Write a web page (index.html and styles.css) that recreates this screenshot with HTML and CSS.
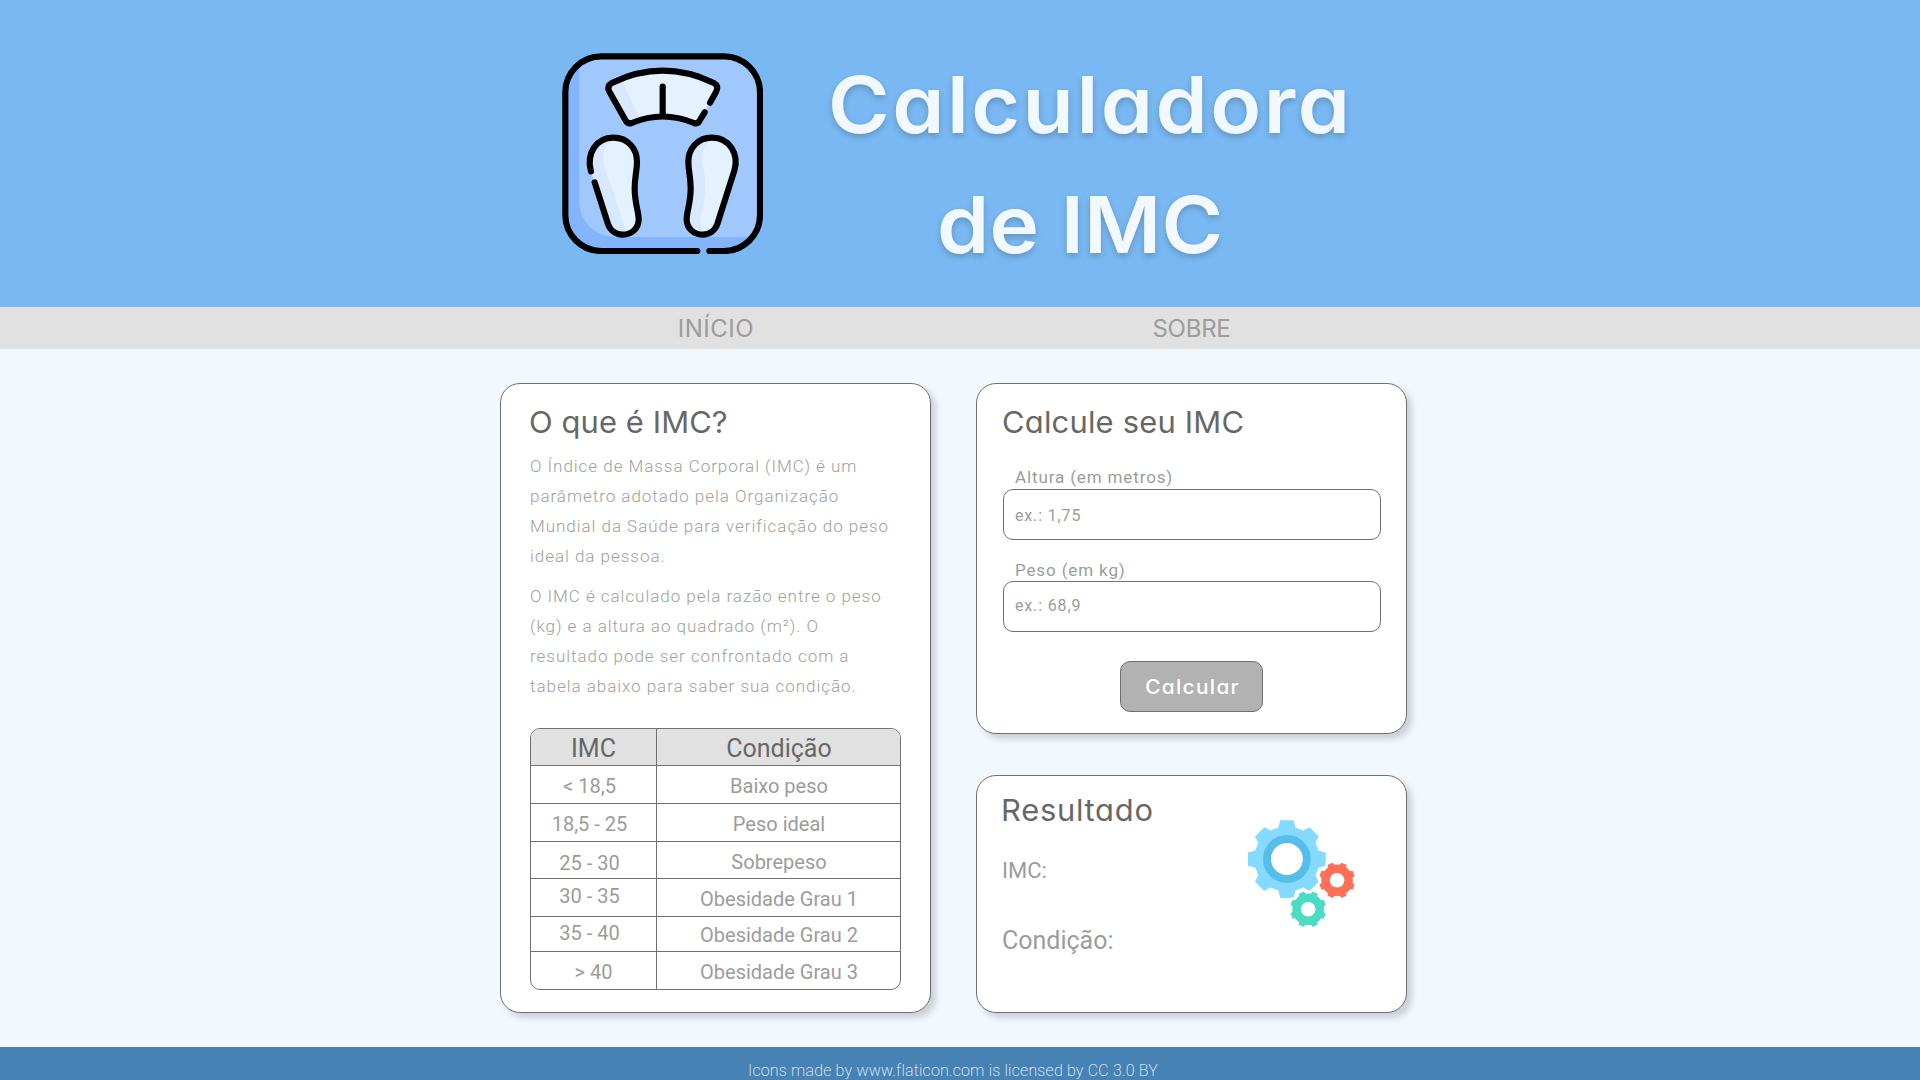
FILE: index.html
```
<!DOCTYPE html>
<html lang="pt-BR">
<head>
<meta charset="utf-8">
<title>Calculadora de IMC</title>
<link rel="stylesheet" href="styles.css">
</head>
<body>
<header class="header">
  <svg class="logo" viewBox="66 69 603 603" aria-hidden="true">
    <defs>
      <clipPath id="body"><rect x="76" y="79" width="584" height="584" rx="108"/></clipPath>
      <path id="foot" d="M220 323C265 323 291 358 291 395C291 422 284 440 284 475C284 520 296 545 296 568C296 595 275 614 248 614C228 614 211 602 204 582L153 422C138 372 168 323 220 323Z"/>
    </defs>
    <g clip-path="url(#body)">
      <rect x="76" y="79" width="584" height="584" fill="#82b5fe"/>
      <path d="M118 60H680V612Q650 621 600 621H224A106 106 0 0 1 118 515Z" fill="#a1c8fd"/>
    </g>
    <path d="M217 158Q368 86 520 158Q537 168 528 183L480 270Q474 283 462 279Q368 240 275 279Q263 283 256 270L207 183Q200 168 217 158Z" fill="#e4f1ff"/>
    <path d="M217 158L243 148L298 262Q286 268 275 279Q263 283 256 270L207 183Q200 168 217 158Z" fill="#d8e8ff"/>
    <use href="#foot" fill="#e4f1ff"/>
    <path d="M220 326C190 345 186 375 190 400C194 420 203 435 212 465L254 590Q257 604 250 612C228 614 211 602 204 582L153 422C138 372 168 323 220 326Z" fill="#d8e8ff"/>
    <use href="#foot" fill="#e4f1ff" transform="matrix(-1 0 0 1 736 0)"/>
    <path d="M516 325C485 350 482 385 490 415C500 455 496 510 484 548C474 580 486 600 498 612C462 618 440 595 440 568C440 545 452 520 452 475C452 440 445 422 445 395C445 358 471 323 516 325Z" fill="#d8e8ff"/>
    <g fill="none" stroke="#000" stroke-width="18.5" stroke-linecap="round" stroke-linejoin="round">
      <path d="M508 663H552A108 108 0 0 0 660 555V187A108 108 0 0 0 552 79H184A108 108 0 0 0 76 187V555A108 108 0 0 0 184 663H472"/>
      <path d="M510 218L528 186Q538 168 520 158Q368 86 217 158Q200 168 207 183L256 270Q263 283 275 279Q368 240 462 279Q474 283 480 270L494 247"/>
      <path d="M368 170V258"/>
      <path d="M153 424C138 372 168 323 220 323C265 323 291 358 291 395C291 422 284 440 284 475C284 520 296 545 296 568C296 595 275 614 248 614C228 614 211 602 204 582L164 457"/>
      <use href="#foot" transform="matrix(-1 0 0 1 736 0)"/>
    </g>
  </svg>
  <h1 class="title"><span class="title-top">Calculadora</span><span class="title-bottom">de IMC</span></h1>
</header>

<nav class="nav">
  <a class="nav-link nav-home">INÍCIO</a>
  <a class="nav-link nav-about">SOBRE</a>
</nav>

<main class="main">
  <section class="card about">
    <h2 class="heading">O que é IMC?</h2>
    <p class="text">O Índice de Massa Corporal (IMC) é um<br>parâmetro adotado pela Organização<br>Mundial da Saúde para verificação do peso<br>ideal da pessoa.</p>
    <p class="text">O IMC é calculado pela razão entre o peso<br>(kg) e a altura ao quadrado (m²). O<br>resultado pode ser confrontado com a<br>tabela abaixo para saber sua condição.</p>
    <div class="table">
      <div class="cell head">IMC</div><div class="cell head">Condição</div>
      <div class="cell range">&lt; 18,5</div><div class="cell">Baixo peso</div>
      <div class="cell range">18,5 - 25</div><div class="cell">Peso ideal</div>
      <div class="cell range low">25 - 30</div><div class="cell">Sobrepeso</div>
      <div class="cell range high">30 - 35</div><div class="cell">Obesidade Grau 1</div>
      <div class="cell range higher">35 - 40</div><div class="cell raised">Obesidade Grau 2</div>
      <div class="cell">&gt; 40</div><div class="cell">Obesidade Grau 3</div>
    </div>
  </section>

  <div class="column">
    <section class="card form">
      <h2 class="heading heading-form">Calcule seu IMC</h2>
      <label class="label" for="height">Altura (em metros)</label>
      <input class="input input-height" id="height" placeholder="ex.: 1,75">
      <label class="label label-weight" for="weight">Peso (em kg)</label>
      <input class="input input-weight" id="weight" placeholder="ex.: 68,9">
      <button class="button"><span class="button-text">Calcular</span></button>
    </section>

    <section class="card result">
      <div>
        <h2 class="heading heading-result">Resultado</h2>
        <p class="result-imc">IMC:</p>
        <p class="result-condition">Condição:</p>
      </div>
      <svg class="gears" viewBox="54 60 322 321" aria-hidden="true">
        <defs>
          <path id="gear" d="M-10-47L-8.5-54H8.5L10-47Q14-46 20 0H-20Q-14-46-10-47Z"/>
          <g id="small">
            <circle r="47.5"/>
            <use href="#gear" transform="rotate(22.5)"/><use href="#gear" transform="rotate(67.5)"/>
            <use href="#gear" transform="rotate(112.5)"/><use href="#gear" transform="rotate(157.5)"/>
            <use href="#gear" transform="rotate(202.5)"/><use href="#gear" transform="rotate(247.5)"/>
            <use href="#gear" transform="rotate(292.5)"/><use href="#gear" transform="rotate(337.5)"/>
          </g>
        </defs>
        <path transform="translate(171 177)" fill="#85daff" d="M-20-117H20L26-95L49-86L68-96L96-68L86-49L95-26L117-20V20L95 26L86 49L96 68L68 96L49 86L26 95L20 117H-20L-26 95L-49 86L-68 96L-96 68L-86 49L-95 26L-117 20V-20L-95-26L-86-49L-96-68L-68-96L-49-86L-26-95Z"/>
        <circle cx="171" cy="177" r="60" fill="#fff" stroke="#56beeb" stroke-width="24"/>
        <g transform="translate(322 241)"><use href="#small" fill="#fff" stroke="#fff" stroke-width="14"/><use href="#small" fill="#ff7058"/><circle r="22" fill="#fff"/></g>
        <g transform="translate(235 328)"><use href="#small" fill="#fff" stroke="#fff" stroke-width="14"/><use href="#small" fill="#4cdbc4"/><circle r="22" fill="#fff"/></g>
      </svg>
    </section>
  </div>
</main>

<footer class="footer">Icons made by www.flaticon.com is licensed by CC 3.0 BY</footer>
</body>
</html>
```
FILE: styles.css
```
* { box-sizing: border-box; margin: 0; padding: 0; }

body {
  height: 1080px;
  overflow: hidden;
  background: #f3f8ff;
  color: #9c9c9c;
  font-family: Roboto, sans-serif;
}

.header {
  display: flex;
  height: 307px;
  padding-left: 562px;
  background: #79b8f2;
}
.logo { width: 201px; height: 201px; margin-top: 53px; }
.title {
  display: flex;
  flex-direction: column;
  align-items: flex-start;
  padding: 44px 0 0 65px;
  color: #f2f8ff;
  font: 600 79px/120px Inter, sans-serif;
  font-feature-settings: "cv11";
  text-shadow: 0 3px 6px rgba(0, 0, 0, .2);
}
.title-top, .title-bottom { transform: scaleX(1.06); transform-origin: left; }
.title-top { letter-spacing: 2.35px; }
.title-bottom { margin-left: 109px; letter-spacing: .25px; }

.nav {
  display: grid;
  grid-template-columns: 431px 431px;
  column-gap: 45px;
  height: 42px;
  padding-left: 500px;
  background: #e1e1e1;
}
.nav-link {
  color: #9c9c9c;
  font: 24px/44px Inter, sans-serif;
  text-align: center;
}
.nav-home { padding-left: 1px; letter-spacing: .5px; }
.nav-about { letter-spacing: -.25px; }

.main { display: flex; gap: 45px; height: 698px; padding: 34px 0 0 500px; }
.column { display: flex; flex-direction: column; gap: 41px; }

.card {
  width: 431px;
  border: 1px solid #707070;
  border-radius: 20px;
  background: #fff;
  box-shadow: 5px 5px 6px rgba(0, 0, 0, .16);
}
.heading {
  color: #676767;
  font: 30px/40px Inter, sans-serif;
  font-feature-settings: "cv11";
  letter-spacing: .1px;
  transform: scaleX(1.03);
  transform-origin: left;
}

.about { height: 630px; padding: 18px 29px 0 28px; }
.text {
  margin: 10px 0 0 1px;
  color: #a0a0a0;
  font-size: 17px;
  font-weight: 300;
  line-height: 30px;
  letter-spacing: .97px;
  white-space: nowrap;
}
.heading + .text { margin-top: 9px; }
.table {
  display: grid;
  grid-template: 37px 38px 38px 37px 38px 35px 37px / 126px 243px;
  margin: 27px 0 0 1px;
  overflow: hidden;
  border: 1px solid #707070;
  border-radius: 10px;
}
.cell {
  padding-top: 8px;
  border-bottom: 1px solid #707070;
  color: #9c9c9c;
  font-size: 20px;
  line-height: 24px;
  text-align: center;
}
.cell:nth-child(odd) { border-right: 1px solid #707070; }
.cell:nth-child(even) { padding-left: 1px; }
.cell:nth-last-child(-n+2) { border-bottom: 0; }
.head { padding-top: 5px; background: #e1e1e1; color: #676767; font-size: 25px; line-height: 30px; }
.range { padding-right: 8px; }
.low { padding-top: 9px; }
.high { padding-top: 5px; }
.higher { padding-top: 4px; }
.raised { padding-top: 6px; }

.form {
  display: flex;
  flex-direction: column;
  height: 351px;
  padding: 18px 25px 0 26px;
}
.heading-form { margin-left: -1px; letter-spacing: .2px; }
.label { margin-top: 25px; padding-left: 12px; font-size: 17px; line-height: 20px; letter-spacing: .87px; }
.label-weight { margin-top: 20px; }
.input {
  height: 51px;
  padding: 0 11px;
  border: 1px solid #707070;
  border-radius: 10px;
  font: 16px Roboto, sans-serif;
  letter-spacing: .85px;
}
.input::placeholder { color: #9c9c9c; }
.input-height { margin-top: 2px; padding-top: 2px; }
.input-weight { margin-top: 1px; padding-bottom: 2px; }
.button {
  align-self: center;
  width: 143px;
  height: 51px;
  margin: 29px 1px 0 0;
  padding: 1px 0 0 2px;
  border: 1px solid #707070;
  border-radius: 10px;
  background: #b2b2b2;
  color: #fff;
  font: 500 20px Inter, sans-serif;
  font-feature-settings: "cv11";
  letter-spacing: 1.3px;
}
.button-text { display: inline-block; transform: scaleX(1.04); }

.result {
  display: flex;
  justify-content: space-between;
  height: 238px;
  padding: 14px 51px 0 25px;
}
.heading-result { margin-left: -1px; letter-spacing: .7px; }
.result-imc { margin-top: 26px; font-size: 22px; line-height: 30px; }
.result-condition { margin-top: 40px; font-size: 25px; line-height: 30px; }
.gears { width: 107px; height: 107px; margin-top: 30px; }

.footer {
  height: 33px;
  padding: 14px 14px 0 0;
  background: #4682b4;
  color: #f2f8ff;
  font-size: 16px;
  font-weight: 200;
  line-height: 19px;
  letter-spacing: .19px;
  text-align: center;
}
```
